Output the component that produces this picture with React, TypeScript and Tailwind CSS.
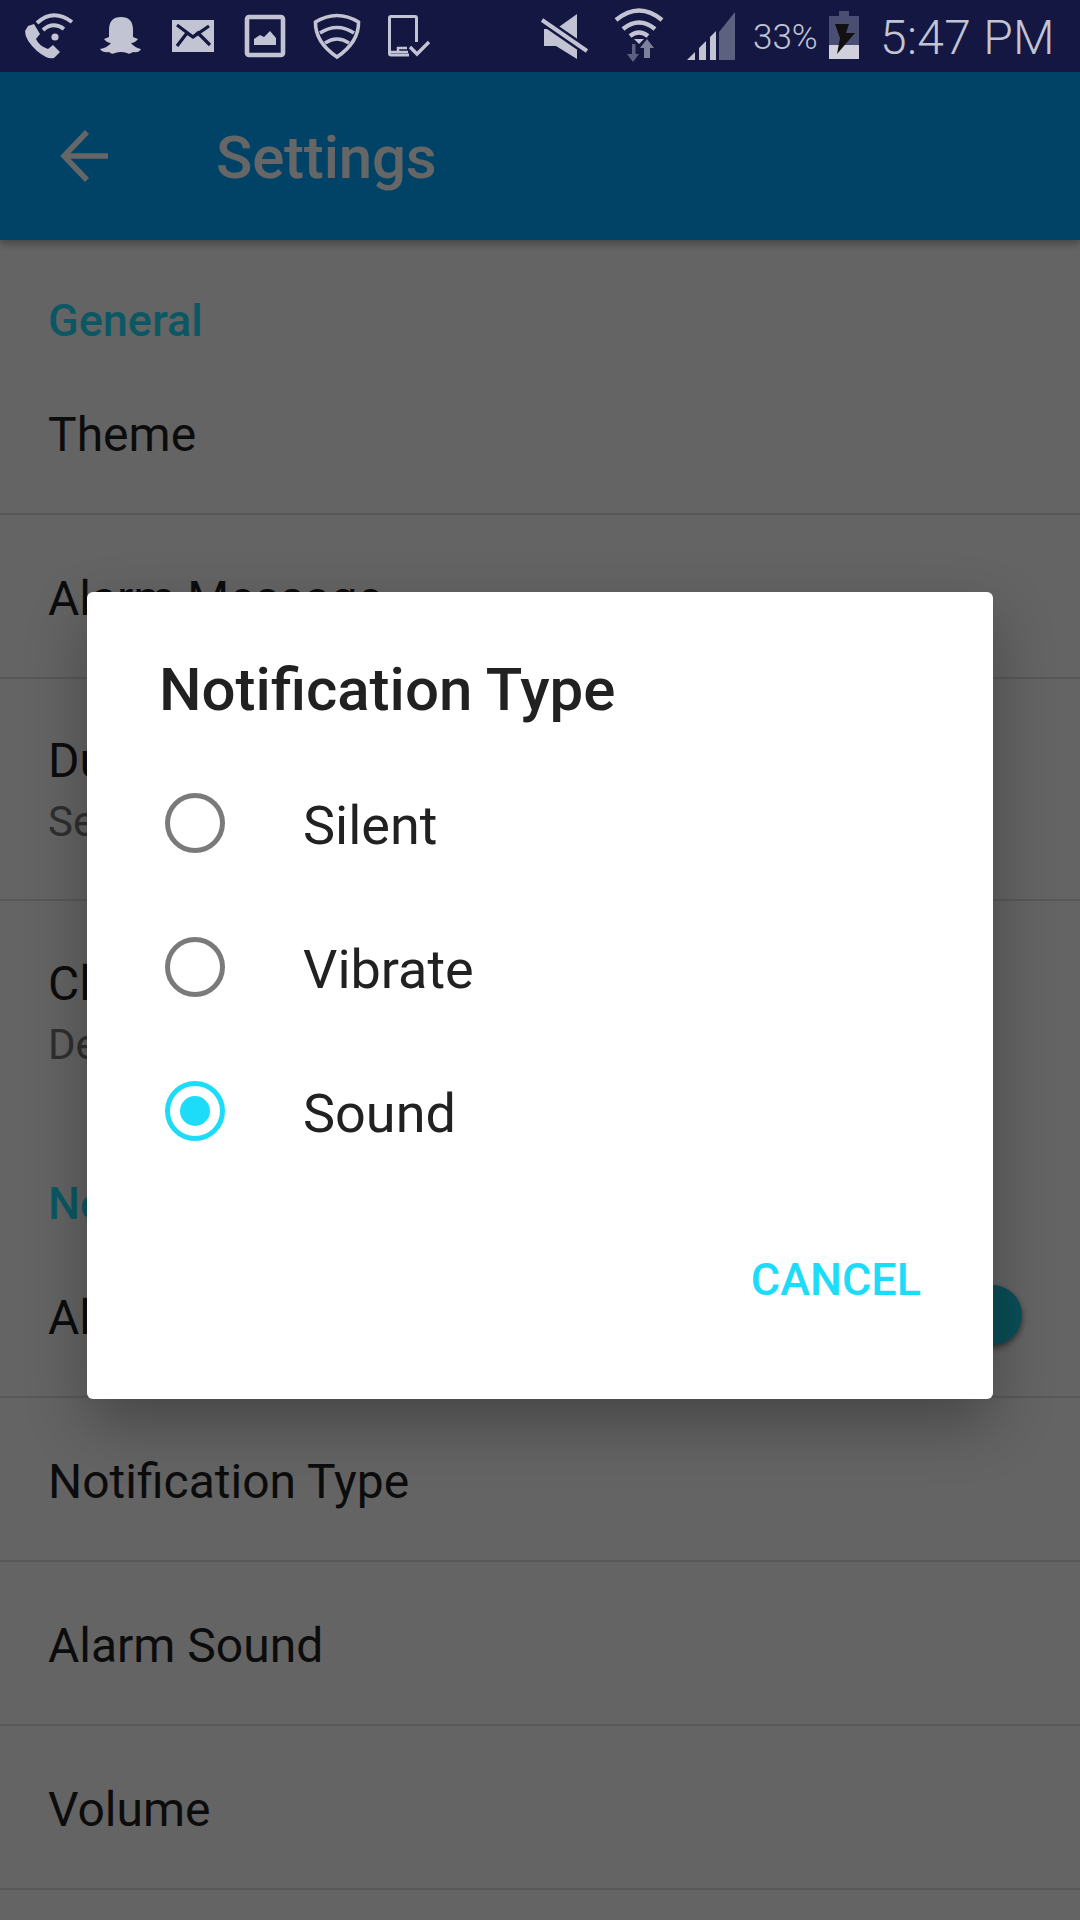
import React from "react";

const ink = "#c2c3d3";
const bar = "#131741";

function StatusIcons() {
  return (
    <svg width="1080" height="72" viewBox="0 0 1080 72" className="absolute left-0 top-0">
      {/* wifi calling */}
      <g transform="translate(1 0)">
        <g fill="none" stroke={ink} strokeWidth="4">
          <path d="M36 23 Q52 8 71 22" />
          <path d="M42 30 Q52 21 63 29" />
        </g>
        <circle cx="54" cy="37" r="3.6" fill={ink} />
        <path d="M27 26 L33 24 L39 34 L35 39 Q38 46 47 49 L52 45 L59 52 L53 58 Q47 60 36 51 Q24 40 24 31 Z" fill={ink} />
      </g>
      {/* ghost */}
      <g transform="translate(3 0)">
        <path d="M118 17 Q130 17 130 30 L130 37 L135 39 Q132 43 128 43 Q132 48 138 49 Q136 53 130 52 Q126 55 124 53 Q118 51 112 53 Q109 55 106 52 Q100 53 97 49 Q104 48 108 43 Q104 43 101 39 L106 37 L106 30 Q106 17 118 17 Z" fill={ink} />
      </g>
      {/* mail */}
      <g transform="translate(6 0)">
        <rect x="166" y="20" width="42" height="32" fill={ink} />
        <path d="M171 25 L187 37 L192 33 L204 45 M203 26 L187 37 L181 33 L171 46" fill="none" stroke={bar} strokeWidth="3.2" />
      </g>
      {/* picture */}
      <g transform="translate(8 0)">
        <rect x="239" y="17" width="36" height="38" rx="2" fill="none" stroke={ink} strokeWidth="4.600" />
        <path d="M246 45 L246 39 L252 35 L256 37 L262 31 L268 38 L268 45 Z" fill={ink} />
      </g>
      {/* shield */}
      <g transform="translate(10 0)">
        <path d="M305.500 22 Q327 9 348.500 22 Q349 42 327 57 Q305 42 305.500 22 Z" fill="none" stroke={ink} strokeWidth="3.600" />
        <path d="M310 33 Q327 22 344 33 M315 43 Q327 35 339 43" fill="none" stroke={ink} strokeWidth="3.600" />
      </g>
      {/* phone check */}
      <g transform="translate(12 0)">
        <path d="M397 55 L379 55 Q377.500 55 377.500 53 L377.500 18 Q377.500 16.500 379 16.500 L403 16.500 Q404.500 16.500 404.500 18 L404.500 42" fill="none" stroke={ink} strokeWidth="3" />
        <path d="M379 52 L396 52 M386 51 L386 48 L395 48" fill="none" stroke={ink} strokeWidth="2.400" />
        <path d="M398 47 L405 54 L417 42" fill="none" stroke={ink} strokeWidth="3.400" />
      </g>
      {/* mute */}
      <g transform="translate(2 0)">
        <path d="M542 29 L554 29 L575 14 L575 59 L554 46 L542 46 Z" fill={ink} />
        <path d="M540 20 L585 51" stroke={bar} strokeWidth="9" />
        <path d="M540 20 L585 51" stroke={ink} strokeWidth="4" />
      </g>
      {/* wifi */}
      <g transform="translate(7 0)">
        <g fill="none" stroke={ink} strokeWidth="4.400">
          <path d="M609 20 Q632 1 655 20" />
          <path d="M616 29 Q632 16 648 29" />
          <path d="M623 36 Q632 29 641 36" />
        </g>
        <path d="M632 44 L627 39 L637 39 Z" fill={ink} />
        <path d="M625 44 L625 54 L620 54 L626 62 L632 54 L628.500 54 L628.500 44 Z" fill="#5c6180" />
        <path d="M640 39 L633 48 L637 48 L637 58 L643 58 L643 48 L647 48 Z" fill="#7c809a" />
      </g>
      {/* signal */}
      <g transform="translate(11 0)">
        <path d="M708 60 L708 32 L724 12 L724 60 Z" fill="#5c6180" />
        <path d="M676 60 L684 52 L684 60 Z M688 60 L688 48 L695 41 L695 60 Z M699 60 L699 37 L705 31 L705 60 Z" fill={ink} />
      </g>
      {/* battery */}
      <g transform="translate(21 0)">
        <rect x="808" y="16" width="30" height="43" fill="#4a4e72" />
        <rect x="818" y="11" width="10" height="5" fill="#4a4e72" />
        <rect x="808" y="45" width="30" height="14" fill="#d0d1dc" />
        <path d="M828 24 L814 24 L819 38 L816 54 L834 33 L825 33 Z" fill="#111" />
      </g>
    </svg>
  );
}

function Row({ title, sub, border = true, toggle = false }: { title: string; sub?: string; border?: boolean; toggle?: boolean }) {
  return (
    <div className={`relative flex flex-col justify-center px-[48px] pt-[6px] ${sub ? "h-[222px]" : "h-[164px]"} ${border ? "border-b-2 border-[#dcdcdc]" : ""}`}>
      <div className="text-[48px] leading-[60px] text-[#1e1e1e]">{title}</div>
      {sub && <div className="text-[42px] leading-[62px] text-[#757575]">{sub}</div>}
      {toggle && <div className="absolute right-[58px] top-[51px] h-[60px] w-[60px] rounded-full bg-[#1ac4d9] shadow-[0_3px_6px_rgba(0,0,0,0.5)]" />}
    </div>
  );
}

function Section({ label }: { label: string }) {
  return <div className="flex h-[111px] items-end px-[48px] pb-[8px] text-[45px] font-medium leading-[44px] text-[#1ddcf9]">{label}</div>;
}

function Radio({ label, on = false }: { label: string; on?: boolean }) {
  return (
    <div className="flex h-[144px] items-center pl-[6px]">
      <div className={`flex h-[60px] w-[60px] shrink-0 items-center justify-center rounded-full border-[5px] ${on ? "border-[#1ddcf9]" : "border-[#7a7a7a]"}`}>
        {on && <div className="h-[30px] w-[30px] rounded-full bg-[#1ddcf9]" />}
      </div>
      <div className="ml-[78px] pt-[6px] text-[54px] leading-[64px] text-[#212121]">{label}</div>
    </div>
  );
}

export default function App() {
  return (
    <div className="relative h-[1920px] w-[1080px] overflow-hidden bg-[#fafafa] font-['Roboto',sans-serif]">
      <div className="relative h-[72px] text-[#c2c3d3]" style={{ background: bar }}>
        <StatusIcons />
        <div className="absolute left-[753px] top-[18px] text-[35px] font-light leading-[40px]">33%</div>
        <div className="absolute left-[880px] top-[10px] text-[48px] font-light leading-[56px] tracking-[0.3px]">5:47 PM</div>
      </div>
      <div className="flex h-[168px] items-center bg-[#01a9ff] text-white shadow-[0_4px_8px_rgba(0,0,0,0.3)]">
        <svg width="54" height="54" viewBox="0 0 54 54" className="ml-[60px]" fill="none" stroke="#fff" strokeWidth="5.500">
          <path d="M3 27 L48 27" />
          <path d="M27 3 L4 27 L27 51" />
        </svg>
        <div className="ml-[102px] pt-[4px] text-[60px] font-medium tracking-[-0.2px]">Settings</div>
      </div>
      <Section label="General" />
      <Row title="Theme" />
      <Row title="Alarm Message" />
      <Row title="Duration" sub="Set the duration" />
      <Row title="Clock" sub="Default" border={false} />
      <Section label="Notifications" />
      <Row title="Alarm" toggle />
      <Row title="Notification Type" />
      <Row title="Alarm Sound" />
      <Row title="Volume" />

      <div className="absolute inset-x-0 bottom-0 top-[72px] flex items-start justify-center bg-black/60">
        <div className="mt-[520px] h-[807px] w-[906px] rounded-[6px] bg-white px-[72px] shadow-[0_24px_60px_rgba(0,0,0,0.3)]">
          <div className="flex h-[159px] items-center pt-[36px] text-[60px] font-medium text-[#212121]">Notification Type</div>
          <Radio label="Silent" />
          <Radio label="Vibrate" />
          <Radio label="Sound" on />
          <div className="flex h-[194px] justify-end pt-[64px] text-[45px] font-medium leading-[66px] text-[#1ddcf9]">CANCEL</div>
        </div>
      </div>
    </div>
  );
}
